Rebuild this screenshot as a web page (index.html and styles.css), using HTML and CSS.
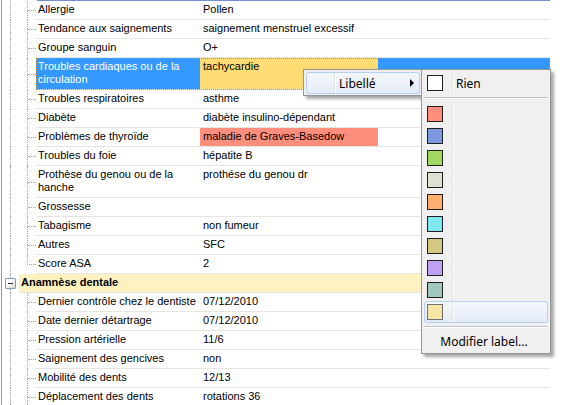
FILE: index.html
```html
<!DOCTYPE html>
<html lang="fr">
<head>
    <meta charset="UTF-8">
    <title>Anamnèse</title>
    <link rel="stylesheet" href="styles.css">
</head>
<body>
    <div class="tree">
        <div class="cap"></div>

        <div class="row">
            <span class="ind"></span><span class="ind2"></span><span class="elbow"><i></i></span>
            <div class="cells"><div class="label">Allergie</div><div class="value">Pollen</div><div class="rest"></div></div>
        </div>
        <div class="row">
            <span class="ind"></span><span class="ind2"></span><span class="elbow"><i></i></span>
            <div class="cells"><div class="label">Tendance aux saignements</div><div class="value">saignement menstruel excessif</div><div class="rest"></div></div>
        </div>
        <div class="row">
            <span class="ind"></span><span class="ind2"></span><span class="elbow"><i></i></span>
            <div class="cells"><div class="label">Groupe sanguin</div><div class="value">O+</div><div class="rest"></div></div>
        </div>
        <div class="row selected">
            <span class="ind"></span><span class="ind2"></span><span class="elbow"><i></i></span>
            <div class="cells"><div class="label">Troubles cardiaques ou de la<br>circulation</div><div class="value mark-yellow">tachycardie</div><div class="rest"></div></div>
        </div>
        <div class="row">
            <span class="ind"></span><span class="ind2"></span><span class="elbow"><i></i></span>
            <div class="cells"><div class="label">Troubles respiratoires</div><div class="value">asthme</div><div class="rest"></div></div>
        </div>
        <div class="row">
            <span class="ind"></span><span class="ind2"></span><span class="elbow"><i></i></span>
            <div class="cells"><div class="label">Diabète</div><div class="value">diabète insulino-dépendant</div><div class="rest"></div></div>
        </div>
        <div class="row">
            <span class="ind"></span><span class="ind2"></span><span class="elbow"><i></i></span>
            <div class="cells"><div class="label">Problèmes de thyroïde</div><div class="value mark-red">maladie de Graves-Basedow</div><div class="rest"></div></div>
        </div>
        <div class="row">
            <span class="ind"></span><span class="ind2"></span><span class="elbow"><i></i></span>
            <div class="cells"><div class="label">Troubles du foie</div><div class="value">hépatite B</div><div class="rest"></div></div>
        </div>
        <div class="row">
            <span class="ind"></span><span class="ind2"></span><span class="elbow"><i></i></span>
            <div class="cells"><div class="label">Prothèse du genou ou de la<br>hanche</div><div class="value">prothése du genou dr</div><div class="rest"></div></div>
        </div>
        <div class="row">
            <span class="ind"></span><span class="ind2"></span><span class="elbow"><i></i></span>
            <div class="cells"><div class="label">Grossesse</div><div class="value"></div><div class="rest"></div></div>
        </div>
        <div class="row">
            <span class="ind"></span><span class="ind2"></span><span class="elbow"><i></i></span>
            <div class="cells"><div class="label">Tabagisme</div><div class="value">non fumeur</div><div class="rest"></div></div>
        </div>
        <div class="row">
            <span class="ind"></span><span class="ind2"></span><span class="elbow"><i></i></span>
            <div class="cells"><div class="label">Autres</div><div class="value">SFC</div><div class="rest"></div></div>
        </div>
        <div class="row last">
            <span class="ind"></span><span class="ind2"></span><span class="elbow"><i></i></span>
            <div class="cells"><div class="label">Score ASA</div><div class="value">2</div><div class="rest"></div></div>
        </div>

        <div class="row group">
            <span class="expander"><i></i><span class="box"></span><i></i></span>
            <div class="cells head">Anamnèse dentale</div>
        </div>

        <div class="row">
            <span class="ind"></span><span class="ind2"></span><span class="elbow"><i></i></span>
            <div class="cells"><div class="label">Dernier contrôle chez le dentiste</div><div class="value">07/12/2010</div><div class="rest"></div></div>
        </div>
        <div class="row">
            <span class="ind"></span><span class="ind2"></span><span class="elbow"><i></i></span>
            <div class="cells"><div class="label">Date dernier détartrage</div><div class="value">07/12/2010</div><div class="rest"></div></div>
        </div>
        <div class="row">
            <span class="ind"></span><span class="ind2"></span><span class="elbow"><i></i></span>
            <div class="cells"><div class="label">Pression artérielle</div><div class="value">11/6</div><div class="rest"></div></div>
        </div>
        <div class="row">
            <span class="ind"></span><span class="ind2"></span><span class="elbow"><i></i></span>
            <div class="cells"><div class="label">Saignement des gencives</div><div class="value">non</div><div class="rest"></div></div>
        </div>
        <div class="row">
            <span class="ind"></span><span class="ind2"></span><span class="elbow"><i></i></span>
            <div class="cells"><div class="label">Mobilité des dents</div><div class="value">12/13</div><div class="rest"></div></div>
        </div>
        <div class="row">
            <span class="ind"></span><span class="ind2"></span><span class="elbow"><i></i></span>
            <div class="cells"><div class="label">Déplacement des dents</div><div class="value">rotations 36</div><div class="rest"></div></div>
        </div>
    </div>

    <!-- menu contextuel -->
    <div class="menu main-menu">
        <div class="item hover">
            <span class="icon"></span>
            <span class="text">Libellé</span>
            <span class="arrow"></span>
        </div>
    </div>

    <div class="menu sub-menu">
        <div class="item">
            <span class="icon"><span class="swatch" style="background:#ffffff"></span></span>
            <span class="text">Rien</span>
        </div>
        <div class="sep"></div>
        <div class="item"><span class="icon"><span class="swatch" style="background:#ff8e7c"></span></span><span class="text"></span></div>
        <div class="item"><span class="icon"><span class="swatch" style="background:#7c98e0"></span></span><span class="text"></span></div>
        <div class="item"><span class="icon"><span class="swatch" style="background:#a0d860"></span></span><span class="text"></span></div>
        <div class="item"><span class="icon"><span class="swatch" style="background:#e0e0d0"></span></span><span class="text"></span></div>
        <div class="item"><span class="icon"><span class="swatch" style="background:#ffad70"></span></span><span class="text"></span></div>
        <div class="item"><span class="icon"><span class="swatch" style="background:#80e8f0"></span></span><span class="text"></span></div>
        <div class="item"><span class="icon"><span class="swatch" style="background:#d2c882"></span></span><span class="text"></span></div>
        <div class="item"><span class="icon"><span class="swatch" style="background:#c0a0f0"></span></span><span class="text"></span></div>
        <div class="item"><span class="icon"><span class="swatch" style="background:#a0c8be"></span></span><span class="text"></span></div>
        <div class="item hover"><span class="icon"><span class="swatch soft" style="background:#f7e6a6"></span></span><span class="text"></span></div>
        <div class="sep"></div>
        <div class="item plain">Modifier label...</div>
    </div>
</body>
</html>
```

FILE: styles.css
```css
* {
    margin: 0;
    padding: 0;
    box-sizing: border-box;
}

body {
    font-family: 'Liberation Sans', Arial, sans-serif;
    font-size: 11px;
    color: #000;
    background: #fff;
    width: 563px;
    height: 405px;
    overflow: hidden;
    position: relative;
}

/* arbre */

.tree {
    width: 549px;
    border-left: 1px solid #7f9db9;
    margin-left: 1px;
}

.cap {
    height: 1px;
    margin-left: 35px;
    background: #7391d2;
}

.row {
    display: flex;
}

.ind {
    width: 9px;
    flex: none;
    border-right: 1px dotted #a0a0a0;
}

.ind2 {
    width: 17px;
    flex: none;
    border-right: 1px dotted #a0a0a0;
}

.elbow {
    width: 8px;
    flex: none;
    display: flex;
    flex-direction: column;
}

.elbow i {
    flex: 1;
    border-bottom: 1px dotted #a0a0a0;
}

.elbow::after {
    content: '';
    flex: 1;
}

.row.last .ind2 {
    border-right: none;
    width: 16px;
}

.row.last .elbow {
    width: 9px;
}

.row.last .elbow i {
    border-left: 1px dotted #a0a0a0;
}

.cells {
    flex: 1;
    display: flex;
    border-bottom: 1px solid #e6e6de;
    line-height: 13px;
}

.label {
    width: 164px;
    flex: none;
    padding: 2px 2px 3px;
    white-space: nowrap;
}

.value {
    width: 178px;
    flex: none;
    padding: 2px 3px 3px;
    white-space: nowrap;
}

.rest {
    flex: 1;
}

.mark-yellow {
    background: #fddc73;
}

.mark-red {
    background: #ff8e7c;
}

.row.selected .cells {
    outline: 1px dotted #d9822b;
    outline-offset: -1px;
}

.row.selected .label,
.row.selected .rest {
    background: #3399ff;
    color: #fff;
}

/* groupe */

.expander {
    width: 17px;
    flex: none;
    display: flex;
    flex-direction: column;
}

.expander i {
    flex: 1;
    width: 0;
    margin-left: 8px;
    border-left: 1px dotted #a0a0a0;
}

.box {
    width: 11px;
    height: 11px;
    margin-left: 3px;
    border: 1px solid #7f9db9;
    border-radius: 1px;
    background: linear-gradient(135deg, #ffffff 35%, #d4d0c4);
    position: relative;
}

.box::after {
    content: '';
    display: block;
    width: 5px;
    height: 1px;
    background: #1a2a4a;
    margin: 4px 0 0 2px;
}

.cells.head {
    background: #fff2c2;
    font-weight: bold;
    padding: 2px 2px 3px;
}

/* menus */

.menu {
    position: absolute;
    background: #f0f0f0;
    border: 1px solid #979797;
    padding: 2px;
    box-shadow: 3px 3px 3px rgba(0, 0, 0, 0.35);
    font-family: 'Noto Sans', 'Open Sans', sans-serif;
    font-size: 12px;
    color: #000;
}

.main-menu {
    left: 303px;
    top: 69px;
    width: 120px;
    height: 27px;
}

.sub-menu {
    left: 421px;
    top: 69px;
    width: 130px;
}

.item {
    display: flex;
    align-items: stretch;
    height: 22px;
    border: 1px solid transparent;
    border-radius: 3px;
}

.item.hover {
    border-color: #b4d0f2;
    background: linear-gradient(#f4f7fc, #e4ecf7);
}

.icon {
    width: 27px;
    flex: none;
    display: flex;
    align-items: center;
    padding-left: 2px;
}

.main-menu .icon {
    width: 27px;
}

.text {
    flex: 1;
    display: flex;
    align-items: center;
    padding-left: 3px;
    border-left: 1px solid #e2e3e3;
    box-shadow: inset 1px 0 0 #fff;
}

.main-menu .text {
    padding-left: 4px;
}

.arrow {
    width: 0;
    height: 0;
    align-self: center;
    margin-right: 5px;
    border-left: 4px solid #000;
    border-top: 4px solid transparent;
    border-bottom: 4px solid transparent;
}

.swatch {
    width: 16px;
    height: 16px;
    border: 1px solid #202020;
}

.swatch.soft {
    border-color: #707070;
}

.sep {
    height: 2px;
    margin: 3px 0 4px;
    border-top: 1px solid #c4c4c4;
    border-bottom: 1px solid #fff;
}

.item.plain {
    justify-content: center;
    align-items: center;
    height: 20px;
    margin-top: -1px;
    padding-right: 4px;
}
```
